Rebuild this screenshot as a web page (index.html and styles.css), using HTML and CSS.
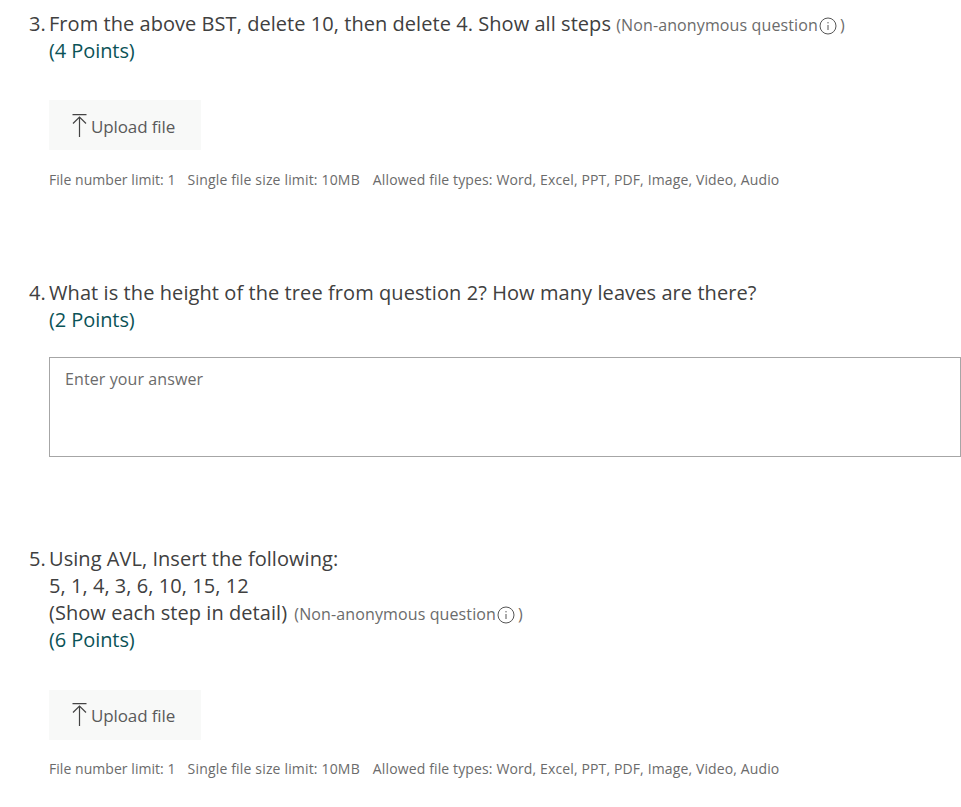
FILE: index.html
```html
<!DOCTYPE html>
<html lang="en">
<head>
  <meta charset="UTF-8">
  <meta name="viewport" content="width=device-width, initial-scale=1.0">
  <title>Questions</title>
  <link rel="stylesheet" href="styles.css">
</head>
<body>
  <div class="question q3">
    <span class="number">3.</span>
    <div class="body">
      <div class="title">From the above BST, delete 10, then delete 4. Show all steps <span class="note">(Non-anonymous question<svg class="info" viewBox="0 0 18 18"><circle cx="9" cy="9" r="8" /><path d="M9 8v5M9 5v1.400" /></svg>)</span></div>
      <div class="points">(4 Points)</div>
      <div class="upload">
        <svg class="upload-icon" viewBox="0 0 15 23"><path d="M0.500 0.600h14M7.500 23V3M1 9.500 7.500 3l6.500 6.500" /></svg>
        <span class="upload-label">Upload file</span>
      </div>
      <div class="limits"><span class="limit-count">File number limit: 1</span><span class="limit-size">Single file size limit: 10MB</span><span>Allowed file types: Word, Excel, PPT, PDF, Image, Video, Audio</span></div>
    </div>
  </div>

  <div class="question q4">
    <span class="number">4.</span>
    <div class="body">
      <div class="title">What is the height of the tree from question 2? How many leaves are there?</div>
      <div class="points">(2 Points)</div>
      <div class="answer">Enter your answer</div>
    </div>
  </div>

  <div class="question q5">
    <span class="number">5.</span>
    <div class="body">
      <div class="title">Using AVL, Insert the following:<br>5, 1, 4, 3, 6, 10, 15, 12<br>(Show each step in detail) <span class="note">(Non-anonymous question<svg class="info" viewBox="0 0 18 18"><circle cx="9" cy="9" r="8" /><path d="M9 8v5M9 5v1.400" /></svg>)</span></div>
      <div class="points">(6 Points)</div>
      <div class="upload">
        <svg class="upload-icon" viewBox="0 0 15 23"><path d="M0.500 0.600h14M7.500 23V3M1 9.500 7.500 3l6.500 6.500" /></svg>
        <span class="upload-label">Upload file</span>
      </div>
      <div class="limits"><span class="limit-count">File number limit: 1</span><span class="limit-size">Single file size limit: 10MB</span><span>Allowed file types: Word, Excel, PPT, PDF, Image, Video, Audio</span></div>
    </div>
  </div>
</body>
</html>
```

FILE: styles.css
```css
body {
  margin: 0;
  background-color: #fff;
  font-family: "Open Sans", "Noto Sans", sans-serif;
  color: #404040;
  overflow: hidden;
}
.question {
  display: flex;
  padding-left: 29px;
  font-size: 20px;
  line-height: 27px;
}
.q3 {
  padding-top: 10px;
}
.q4 {
  padding-top: 89px;
}
.q5 {
  padding-top: 88px;
}
.number {
  width: 20px;
  flex-shrink: 0;
}
.body {
  flex: 1;
}
.title {
  letter-spacing: 0.05px;
}
.q4 .title {
  letter-spacing: 0.08px;
}
.note {
  font-size: 16px;
  line-height: 1;
  color: #6b6b6b;
  letter-spacing: 0.12px;
}
.q5 .note {
  margin-left: 2px;
}
.info {
  width: 18px;
  height: 18px;
  margin: 0 3px 0 1px;
  vertical-align: -4px;
  fill: none;
  stroke: #555;
  stroke-width: 1;
}
.points {
  color: #0b5357;
  letter-spacing: -0.08px;
}
.upload {
  display: flex;
  align-items: center;
  gap: 4px;
  width: 152px;
  height: 50px;
  margin-top: 36px;
  padding-left: 23px;
  box-sizing: border-box;
  background-color: #f8f9f8;
  font-size: 17px;
  color: #5a5a5a;
  letter-spacing: -0.12px;
}
.q5 .upload {
  margin-top: 37px;
  padding-bottom: 2px;
}
.upload-label {
  padding-top: 2px;
}
.upload-icon {
  width: 15px;
  height: 23px;
  fill: none;
  stroke: #444;
  stroke-width: 1.2;
}
.limits {
  display: flex;
  gap: 13px;
  margin-top: 20px;
  font-size: 14px;
  line-height: 20px;
  color: #6b6b6b;
  letter-spacing: 0.13px;
}
.q5 .limits {
  margin-top: 19px;
}
.limit-count {
  margin-right: -1px;
  letter-spacing: 0.05px;
}
.limit-size {
  letter-spacing: 0.17px;
}
.answer {
  height: 100px;
  margin-top: 24px;
  padding: 8px 15px;
  box-sizing: border-box;
  border: 1px solid #a6a6a6;
  font-size: 16px;
  line-height: 27px;
  color: #6b6b6b;
  letter-spacing: 0.1px;
}
```
